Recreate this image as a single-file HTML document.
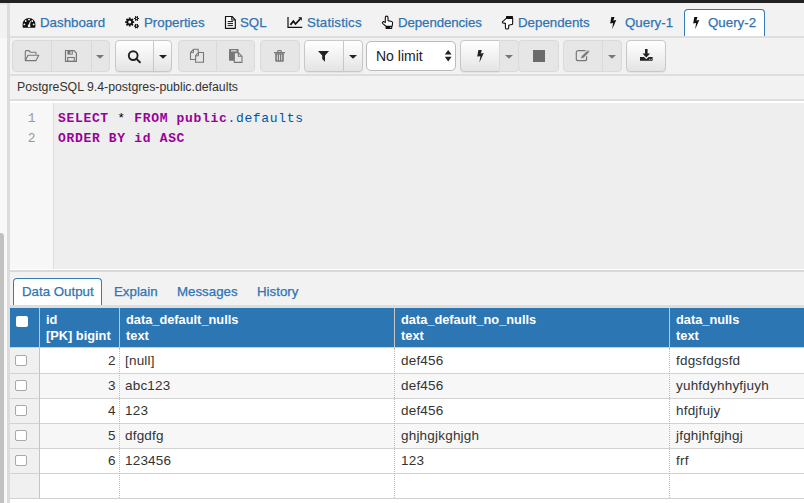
<!DOCTYPE html>
<html><head><meta charset="utf-8">
<style>
*{box-sizing:border-box;margin:0;padding:0}
html,body{width:804px;height:503px;overflow:hidden;background:#f2f2f2;font-family:"Liberation Sans",sans-serif;position:relative}
.a{position:absolute}
svg{position:absolute;overflow:visible}
#topbar{left:0;top:0;width:804px;height:3px;background:#222}
#leftpanel{left:0;top:3px;width:7px;height:500px;background:#f8f8f8}
#leftline{left:7px;top:3px;width:3px;height:500px;background:#dcdcdc}
#thumb{left:0;top:233px;width:4px;height:270px;background:#c1c1c1;border-radius:0 3px 0 0}
#tabbar{left:10px;top:3px;width:794px;height:35px;background:#f2f2f2;border-bottom:2px solid #dedede}
.t{position:absolute;font-size:13.3px;line-height:13px;color:#2f74b3;white-space:nowrap;-webkit-text-stroke:0.25px #2f74b3}
#qtab{left:684px;top:9px;width:81px;height:27px;background:#fff;border:1px solid #337ab7;border-bottom:none;border-radius:4px 4px 0 0}
#toolbar{left:10px;top:38px;width:794px;height:38px;background:#f2f2f2;border-bottom:2px solid #dedede}
.b{position:absolute;top:40px;height:32px;border:1px solid #c8c8c8;background:linear-gradient(#fff,#e4e4e4);box-shadow:0 1px 1px rgba(0,0,0,.06)}
.b.d{background:#e6e6e6;border-color:#dadada;box-shadow:none}
.l{border-radius:4px 0 0 4px}.r{border-radius:0 4px 4px 0}.lr{border-radius:4px}
#connbar{left:10px;top:76px;width:794px;height:25px;background:#f2f2f2;border-bottom:2px solid #dedede}
#editor{left:10px;top:101px;width:794px;height:168px;background:#eee;border-top:2px solid #fff}
#gutter{left:10px;top:103px;width:44px;height:166px;background:#f7f7f7;border-right:1px solid #ddd}
.ln{position:absolute;left:10px;width:25.5px;text-align:right;font:13px/20px "Liberation Mono",monospace;color:#999}
.code{position:absolute;left:58px;font:bold 13px/20px "Liberation Mono",monospace;letter-spacing:0.67px;color:#909;white-space:pre}
.code i{font-style:normal;font-weight:normal;color:#05a}
.code b{color:#000;font-weight:normal}
#split{left:10px;top:269px;width:794px;height:3px;background:#d9d9d9;border-top:1px solid #fff}
#rtabs{left:10px;top:272px;width:794px;height:33px;background:#f2f2f2}
#dtab{left:13px;top:278px;width:89px;height:27px;background:#fff;border:1px solid #337ab7;border-bottom:none;border-radius:4px 4px 0 0}
#gridtop{left:10px;top:305px;width:794px;height:3px;background:#ddd}
#grid{left:10px;top:308px;width:794px;height:195px;background:#fff}
#ghead{left:10px;top:308px;width:794px;height:39px;background:#2c76b4}
.vh{position:absolute;top:308px;height:39px;width:1px;background:#c6c6c6}
.ht{position:absolute;color:#fff;font-weight:bold;font-size:12.8px;line-height:15.5px;white-space:nowrap}
.row{position:absolute;left:10px;width:794px;height:25px;border-bottom:1px solid #d2d2d2;background:#fff}
.row.g{background:#f7f7f7}
.cb{position:absolute;left:10px;width:30px;height:25px;background:#f0f0f0;border-right:1px solid #c4c4c4;border-bottom:1px solid #d2d2d2}
.ck{position:absolute;width:12px;height:11px;border:1px solid #a8a8a8;border-radius:2px;background:#fff}
.dv{position:absolute;top:348px;height:150px;width:0;border-left:1px dotted #bbb}
.c{position:absolute;font-size:13.5px;line-height:16px;color:#333;letter-spacing:0.2px;white-space:nowrap}
</style></head><body>
<div class="a" id="topbar"></div>
<div class="a" id="leftpanel"></div>
<div class="a" style="left:0;top:3px;width:7px;height:35px;background:#f2f2f2;border-top:2px solid #e8e8e8"></div>
<div class="a" id="thumb"></div>
<div class="a" id="leftline"></div>

<!-- main tabs -->
<div class="a" id="tabbar"></div>
<div class="a" id="qtab"></div>
<!-- dashboard icon -->
<svg style="left:22px;top:17px" width="14" height="11" viewBox="0 0 14 11">
 <path d="M1.4,10.8 Q0.6,10.8 0.6,9.6 L0.6,7.4 A6.4,6.4 0 0 1 13.4,7.4 L13.4,9.6 Q13.4,10.8 12.6,10.8 Z" fill="#111"/>
 <ellipse cx="7" cy="2.6" rx="1.1" ry="0.8" fill="#f2f2f2"/>
 <circle cx="3.7" cy="4" r="0.9" fill="#f2f2f2"/>
 <circle cx="10.3" cy="4" r="0.9" fill="#f2f2f2"/>
 <circle cx="2.4" cy="7.4" r="0.9" fill="#f2f2f2"/>
 <circle cx="11.6" cy="7.4" r="0.9" fill="#f2f2f2"/>
 <path d="M6.4,8.4 L8.2,3.8 L8.9,4 L7.8,8.8 Z" fill="#f2f2f2"/>
 <circle cx="7.1" cy="8.9" r="1.35" fill="#f2f2f2"/>
</svg>
<span class="t" style="left:40px;top:16px">Dashboard</span>
<!-- cogs -->
<svg style="left:124px;top:16px" width="16" height="14" viewBox="0 0 16 14">
 <g fill="#111" stroke="#111">
  <circle cx="5.7" cy="6.1" r="3.3" stroke="none"/>
  <path stroke-width="1.8" d="M5.7,1.6 V10.6 M1.2,6.1 H10.2 M2.5,2.9 L8.9,9.3 M8.9,2.9 L2.5,9.3"/>
  <circle cx="12.5" cy="2.5" r="1.7" stroke="none"/>
  <path stroke-width="1.1" d="M10,2.5 H15 M11.25,0.33 L13.75,4.67 M13.75,0.33 L11.25,4.67"/>
  <circle cx="12.5" cy="10.1" r="1.7" stroke="none"/>
  <path stroke-width="1.1" d="M10,10.1 H15 M11.25,7.93 L13.75,12.27 M13.75,7.93 L11.25,12.27"/>
 </g>
 <circle cx="5.7" cy="6.1" r="1.5" fill="#f2f2f2"/>
 <circle cx="12.5" cy="2.5" r="0.75" fill="#f2f2f2"/>
 <circle cx="12.5" cy="10.1" r="0.75" fill="#f2f2f2"/>
</svg>
<span class="t" style="left:144px;top:16px">Properties</span>
<!-- sql file icon -->
<svg style="left:224px;top:15px" width="13" height="15" viewBox="0 0 13 15">
 <path d="M1.5,1.5 H8 L11.3,4.8 V13.3 H1.5 Z" fill="#fff" stroke="#111" stroke-width="1.2" stroke-linejoin="round"/>
 <path d="M7.8,1.5 V5 H11.3" fill="none" stroke="#111" stroke-width="1.1"/>
 <path d="M3.6,6.6 H9 M3.6,8.6 H9 M3.6,10.6 H9" stroke="#111" stroke-width="1"/>
</svg>
<span class="t" style="left:240px;top:16px">SQL</span>
<!-- statistics -->
<svg style="left:287px;top:16px" width="16" height="13" viewBox="0 0 16 13">
 <path d="M1,1 V11.3 H15.2" fill="none" stroke="#111" stroke-width="1.2"/>
 <path d="M3.4,8.9 L6.4,5.2 L8.5,8 L13,3.2" fill="none" stroke="#111" stroke-width="1.7"/>
 <path d="M11.2,1.2 L14.8,1.2 L14.8,4.8 Z" fill="#111"/>
</svg>
<span class="t" style="left:307px;top:16px;letter-spacing:0.15px">Statistics</span>
<!-- hand up -->
<svg style="left:381px;top:15px" width="13" height="15" viewBox="0 0 13 15">
 <path d="M4.3,7.6 V2.5 A1.35,1.35 0 0 1 7,2.5 V5.6 L10.6,6.5 A1.3,1.3 0 0 1 11.6,7.8 L11.2,11.2 H5 L1.8,8.6 A1.1,1.1 0 0 1 1.6,7.2 L2.5,6.5 Z" fill="#fff" stroke="#111" stroke-width="1.1" stroke-linejoin="round"/>
 <rect x="4.6" y="11" width="6.6" height="3" rx="0.5" fill="#111"/>
 <circle cx="9.8" cy="12.6" r="0.55" fill="#fff"/>
</svg>
<span class="t" style="left:398px;top:16px;letter-spacing:-0.1px">Dependencies</span>
<!-- hand down -->
<svg style="left:501px;top:15px" width="13" height="15" viewBox="0 0 13 15">
 <rect x="5" y="1" width="7" height="2.6" rx="0.5" fill="#111"/>
 <path d="M5.3,3.4 H11.7 L11.6,9.2 L7.7,10.3 V12.4 A1.65,1.65 0 0 1 4.4,12.4 V8.4 L1.7,7.9 A0.8,0.8 0 0 1 1.6,6.6 Z" fill="#fff" stroke="#111" stroke-width="1.1" stroke-linejoin="round"/>
</svg>
<span class="t" style="left:518px;top:16px">Dependents</span>
<!-- bolt 1 -->
<svg style="left:609px;top:17px" width="8" height="13" viewBox="0 0 8 13">
 <path d="M2.3,0 H5.5 L4.4,3.5 L7.3,3 L3.4,11.8 L3.2,11.8 L4.1,6 L1.2,6.4 Z" fill="#111"/>
</svg>
<span class="t" style="left:625px;top:16px">Query-1</span>
<svg style="left:692px;top:17px" width="8" height="13" viewBox="0 0 8 13">
 <path d="M2.3,0 H5.5 L4.4,3.5 L7.3,3 L3.4,11.8 L3.2,11.8 L4.1,6 L1.2,6.4 Z" fill="#111"/>
</svg>
<span class="t" style="left:708px;top:16px">Query-2</span>

<!-- toolbar -->
<div class="a" id="toolbar"></div>
<div class="b d l" style="left:12px;width:40px"></div>
<div class="b d" style="left:51px;width:41px"></div>
<div class="b d r" style="left:91px;width:19px"></div>
<div class="b l" style="left:115px;width:39px"></div>
<div class="b r" style="left:153px;width:19px"></div>
<div class="b d l" style="left:178px;width:39px"></div>
<div class="b d r" style="left:216px;width:39px"></div>
<div class="b d lr" style="left:260px;width:40px"></div>
<div class="b l" style="left:304px;width:40px"></div>
<div class="b r" style="left:343px;width:20px"></div>
<div class="a" style="left:366px;top:41px;width:90px;height:30px;border:1px solid #bbb;border-radius:5px;background:#fff"></div>
<span class="a" style="left:376px;top:48px;font-size:14px;line-height:16px;color:#222">No limit</span>
<svg style="left:444px;top:49px" width="9" height="15" viewBox="0 0 9 15">
 <path d="M0.8,5.6 L4.2,0.9 L7.6,5.6 Z M0.8,7.8 L4.2,12.6 L7.6,7.8 Z" fill="#222"/>
</svg>
<div class="b l" style="left:460px;width:40px"></div>
<div class="b d r" style="left:499px;width:20px"></div>
<div class="b d lr" style="left:518px;width:41px"></div>
<div class="b d l" style="left:563px;width:40px"></div>
<div class="b d r" style="left:602px;width:20px"></div>
<div class="b lr" style="left:626px;width:40px"></div>
<!-- toolbar icons -->
<svg style="left:24px;top:49px" width="16" height="13" viewBox="0 0 16 13">
 <path d="M1.3,11.5 V2.6 A1,1 0 0 1 2.3,1.6 H5 L6.2,3.2 H11.2 A0.8,0.8 0 0 1 12,4 V5.6" fill="none" stroke="#777" stroke-width="1.1"/>
 <path d="M1.4,11.6 L4,6.3 H14.8 L12,11.6 Z" fill="none" stroke="#777" stroke-width="1.1" stroke-linejoin="round"/>
</svg>
<svg style="left:64px;top:49px" width="14" height="14" viewBox="0 0 14 14">
 <path d="M1.5,1.5 H9.8 L12.4,4.1 V12.4 H1.5 Z" fill="none" stroke="#777" stroke-width="1.2" stroke-linejoin="round"/>
 <rect x="3.4" y="1.6" width="5.4" height="4" fill="#777"/>
 <rect x="6.3" y="2.4" width="1.4" height="2.4" fill="#e6e6e6"/>
 <rect x="3.7" y="8.5" width="6.6" height="3.9" fill="none" stroke="#777" stroke-width="1.1"/>
</svg>
<svg style="left:95px;top:54px" width="10" height="6" viewBox="0 0 10 6"><path d="M1,1 H9 L5,4.8 Z" fill="#777"/></svg>
<svg style="left:126px;top:49px" width="16" height="16" viewBox="0 0 16 16">
 <circle cx="7.2" cy="6.6" r="4.4" fill="none" stroke="#222" stroke-width="1.9"/>
 <path d="M10.5,9.9 L13.9,13.2" stroke="#222" stroke-width="2" stroke-linecap="round"/>
</svg>
<svg style="left:158px;top:54px" width="10" height="6" viewBox="0 0 10 6"><path d="M1,1 H9 L5,4.8 Z" fill="#222"/></svg>
<svg style="left:189px;top:48px" width="16" height="16" viewBox="0 0 16 16">
 <path d="M1.5,4.5 L4.5,1.3 H9.2 V4.2 M1.5,4.5 V11.5 H6" fill="none" stroke="#777" stroke-width="1.1" stroke-linejoin="round"/>
 <path d="M1.5,4.6 H4.5 V1.5" fill="none" stroke="#777" stroke-width="1"/>
 <path d="M6.6,7.7 L9.4,4.5 H14.5 V14.3 H6.6 Z" fill="#e6e6e6" stroke="#777" stroke-width="1.1" stroke-linejoin="round"/>
 <path d="M6.6,7.8 H9.5 V4.6" fill="none" stroke="#777" stroke-width="1"/>
</svg>
<svg style="left:228px;top:48px" width="16" height="16" viewBox="0 0 16 16">
 <rect x="1" y="1" width="9.6" height="11.7" rx="0.6" fill="#777"/>
 <rect x="3" y="2.2" width="5.6" height="1.2" fill="#e6e6e6"/>
 <path d="M6.3,4.7 H10.4 L14,8.3 V14.4 H6.3 Z" fill="#e6e6e6" stroke="#777" stroke-width="1.1" stroke-linejoin="round"/>
 <path d="M10.3,4.8 V8.3 H14" fill="none" stroke="#777" stroke-width="1.1"/>
</svg>
<svg style="left:273px;top:49px" width="13" height="14" viewBox="0 0 13 14">
 <path d="M4.7,3.4 V2.4 A0.8,0.8 0 0 1 5.5,1.6 H7.5 A0.8,0.8 0 0 1 8.3,2.4 V3.4" fill="none" stroke="#777" stroke-width="1.1"/>
 <rect x="1" y="3" width="11" height="1.3" fill="#777"/>
 <path d="M2.2,4.3 H10.8 V11.8 A1,1 0 0 1 9.8,12.8 H3.2 A1,1 0 0 1 2.2,11.8 Z" fill="#777"/>
 <path d="M4.3,5.6 V11.3 M6.5,5.6 V11.3 M8.7,5.6 V11.3" stroke="#e6e6e6" stroke-width="0.9"/>
</svg>
<svg style="left:317px;top:50px" width="13" height="13" viewBox="0 0 13 13">
 <path d="M1,1 H12 L8,5.4 V11.8 L5.2,9 V5.4 Z" fill="#222"/>
</svg>
<svg style="left:348px;top:54px" width="10" height="6" viewBox="0 0 10 6"><path d="M1,1 H9 L5,4.8 Z" fill="#222"/></svg>
<svg style="left:476px;top:49px" width="9" height="15" viewBox="0 0 9 15">
 <path d="M2.4,1 H5.8 L4.8,4.6 L7.8,4 L3.4,13.6 L4.4,7.2 L1.2,7.6 Z" fill="#222"/>
</svg>
<svg style="left:504px;top:54px" width="10" height="6" viewBox="0 0 10 6"><path d="M1,1 H9 L5,4.8 Z" fill="#777"/></svg>
<div class="a" style="left:533px;top:50px;width:12px;height:12px;background:#6b6b6b"></div>
<svg style="left:575px;top:49px" width="16" height="14" viewBox="0 0 16 14">
 <path d="M10.6,1.6 H3.3 A2,2 0 0 0 1.3,3.6 V9.7 A2,2 0 0 0 3.3,11.7 H9.6 A2,2 0 0 0 11.6,9.7 V7.2" fill="none" stroke="#777" stroke-width="1.2"/>
 <path d="M5.6,10 L6.3,7.2 L12.9,0.7 L14.9,2.7 L8.4,9.2 Z" fill="#777" stroke="#e6e6e6" stroke-width="0.8"/>
 <path d="M12,1.6 L14,3.6" stroke="#e6e6e6" stroke-width="0.6"/>
</svg>
<svg style="left:607px;top:54px" width="10" height="6" viewBox="0 0 10 6"><path d="M1,1 H9 L5,4.8 Z" fill="#777"/></svg>
<svg style="left:639px;top:48px" width="15" height="14" viewBox="0 0 15 14">
 <path d="M6,1 H8.6 V5.4 H11.1 L7.3,9.5 L3.5,5.4 H6 Z" fill="#222"/>
 <path d="M1,9 H5 L7.3,11.2 L9.6,9 H13.6 V12.8 H1 Z" fill="#222"/>
 <circle cx="10.6" cy="11.3" r="0.5" fill="#eee"/><circle cx="12.2" cy="11.3" r="0.5" fill="#eee"/>
</svg>

<!-- connection bar -->
<div class="a" id="connbar"></div>
<span class="a" style="left:17px;top:80px;font-size:12.3px;line-height:14px;color:#333;white-space:nowrap">PostgreSQL 9.4-postgres-public.defaults</span>

<!-- editor -->
<div class="a" id="editor"></div>
<div class="a" id="gutter"></div>
<div class="ln" style="top:109px">1</div>
<div class="ln" style="top:129px">2</div>
<div class="code" style="top:109px">SELECT <b>*</b> FROM public<i>.defaults</i></div>
<div class="code" style="top:129px">ORDER BY id ASC</div>
<div class="a" id="split"></div>

<!-- result tabs -->
<div class="a" id="rtabs"></div>
<div class="a" id="dtab"></div>
<span class="t" style="left:22px;top:285px">Data Output</span>
<span class="t" style="left:114px;top:285px">Explain</span>
<span class="t" style="left:177px;top:285px">Messages</span>
<span class="t" style="left:257px;top:285px">History</span>
<div class="a" id="gridtop"></div>

<!-- grid -->
<div class="a" id="grid"></div>
<div class="a" id="ghead"></div>
<div class="vh" style="left:39px"></div>
<div class="vh" style="left:119px"></div>
<div class="vh" style="left:394px"></div>
<div class="vh" style="left:669px"></div>
<div class="ck" style="left:16px;top:316px;border:none;width:12px;height:11px"></div>
<span class="ht" style="left:46px;top:312px">id<br>[PK] bigint</span>
<span class="ht" style="left:126px;top:312px">data_default_nulls<br>text</span>
<span class="ht" style="left:401px;top:312px">data_default_no_nulls<br>text</span>
<span class="ht" style="left:676px;top:312px">data_nulls<br>text</span>

<div class="a" style="left:10px;top:347px;width:794px;height:1px;background:#cfcfcf"></div>
<div class="row" style="top:348px;height:26px"></div>
<div class="row g" style="top:374px"></div>
<div class="row" style="top:399px"></div>
<div class="row g" style="top:424px"></div>
<div class="row" style="top:449px"></div>
<div class="row" style="top:474px"></div>
<div class="cb" style="top:348px;height:26px"></div>
<div class="cb" style="top:374px"></div>
<div class="cb" style="top:399px"></div>
<div class="cb" style="top:424px"></div>
<div class="cb" style="top:449px"></div>
<div class="cb" style="top:474px"></div>
<div class="ck" style="left:15px;top:355px"></div>
<div class="ck" style="left:15px;top:380px"></div>
<div class="ck" style="left:15px;top:405px"></div>
<div class="ck" style="left:15px;top:430px"></div>
<div class="ck" style="left:15px;top:455px"></div>
<div class="dv" style="left:119px"></div>
<div class="dv" style="left:394px"></div>
<div class="dv" style="left:669px"></div>

<span class="c" style="left:108px;top:353px">2</span>
<span class="c" style="left:125px;top:353px">[null]</span>
<span class="c" style="left:401px;top:353px">def456</span>
<span class="c" style="left:676px;top:353px">fdgsfdgsfd</span>
<span class="c" style="left:108px;top:378px">3</span>
<span class="c" style="left:125px;top:378px">abc123</span>
<span class="c" style="left:401px;top:378px">def456</span>
<span class="c" style="left:676px;top:378px">yuhfdyhhyfjuyh</span>
<span class="c" style="left:108px;top:403px">4</span>
<span class="c" style="left:125px;top:403px">123</span>
<span class="c" style="left:401px;top:403px">def456</span>
<span class="c" style="left:676px;top:403px">hfdjfujy</span>
<span class="c" style="left:108px;top:428px">5</span>
<span class="c" style="left:125px;top:428px">dfgdfg</span>
<span class="c" style="left:401px;top:428px">ghjhgjkghjgh</span>
<span class="c" style="left:676px;top:428px">jfghjhfgjhgj</span>
<span class="c" style="left:108px;top:453px">6</span>
<span class="c" style="left:125px;top:453px">123456</span>
<span class="c" style="left:401px;top:453px">123</span>
<span class="c" style="left:676px;top:453px">frf</span>
</body></html>
